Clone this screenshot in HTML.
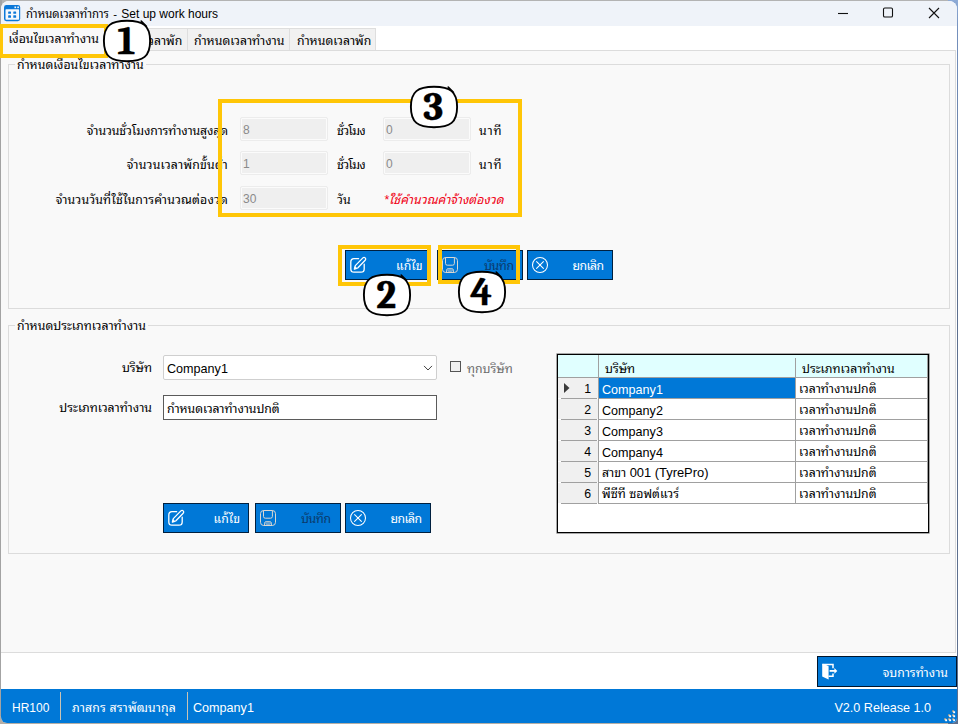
<!DOCTYPE html>
<html lang="th">
<head>
<meta charset="utf-8">
<title>กำหนดเวลาทำการ - Set up work hours</title>
<style>
html,body{margin:0;padding:0;}
body{width:958px;height:724px;position:relative;overflow:hidden;background:#b4aea6;
 font-family:"Liberation Sans","Noto Sans Thai Looped","Loma","Noto Sans Thai UI","Noto Sans Thai","Sarabun",sans-serif;
 font-size:12.3px;color:#000;}
.abs,#win div,#win svg{position:absolute;}
.t{white-space:nowrap;line-height:16px;height:16px;}
.r{text-align:right;}
#frame{left:1px;top:1px;width:956px;height:722px;background:#fff;border-radius:8px 8px 5px 6px;overflow:hidden;}
#win{left:0;top:0;width:958px;height:724px;}
#title{left:1px;top:1px;width:956px;height:25px;background:#eff3f9;border-radius:8px 8px 0 0;}
.tab{top:28px;height:22px;background:#f1f1f1;border:1px solid #dedede;border-bottom:none;box-sizing:border-box;}
.tab.sel{top:26px;height:25px;background:#f9f9f9;}
#panel{left:1px;top:50px;width:955px;height:603px;background:#f9f9f9;border:1px solid #dcdcdc;border-left:none;box-sizing:border-box;}
.gb{border:1px solid #dcdcdc;box-sizing:border-box;}
.gbt{background:#f9f9f9;padding:0 2px;}
.inp{background:#efefef;border:1px solid #ececec;box-shadow:inset 0 0 0 1px #fbfbfb;border-radius:2px;box-sizing:border-box;width:88px;height:24px;}
.inp span{position:absolute;left:2px;top:4px;color:#8a8a8a;font-size:12px;line-height:16px;}
.btn{background:#0078d7;border:1px solid #00203f;box-sizing:border-box;color:#fff;width:86px;height:30px;}
.ic{margin:-1px 0 0 -1px;}
.hl{border:4px solid #ffc607;box-sizing:border-box;}
.num{font-family:"Caladea","Liberation Serif",serif;font-weight:bold;}
</style>
</head>
<body>
<div class="abs" style="left:0;top:0;width:958px;height:12px;background:#b3b3b3"></div>
<div class="abs" style="left:0;top:0;width:2px;height:716px;background:#a3a3a3"></div>
<div class="abs" style="left:948px;top:0;width:10px;height:724px;background:linear-gradient(#8eabd6,#7490bd 30px,#5c6f8e 300px,#5c6f8e)"></div>
<div id="frame" class="abs"></div>
<div id="win" class="abs">
  <div id="title" class="abs">
    <svg style="left:2.8px;top:3.8px" width="17" height="17" viewBox="0 0 17 17">
      <rect x="0" y="0" width="16.2" height="16.2" rx="2.4" fill="#0b78d9"/>
      <rect x="1.5" y="4.15" width="13.6" height="10.6" rx="0.7" fill="#f4f8fd"/>
      <rect x="4.15" y="6.5" width="2.85" height="2.3" rx="0.4" fill="#0b78d9"/>
      <rect x="9.3" y="6.5" width="2.85" height="2.3" rx="0.4" fill="#0b78d9"/>
      <rect x="4.15" y="10.3" width="2.85" height="2.5" rx="0.4" fill="#0b78d9"/>
      <rect x="9.3" y="10.3" width="2.85" height="2.5" rx="0.4" fill="#0b78d9"/>
      <rect x="10.45" y="1.5" width="1.65" height="1.65" fill="#f4f8fd"/>
      <rect x="13.3" y="1.5" width="1.65" height="1.65" fill="#f4f8fd"/>
    </svg>
    <div class="t" id="ttl" style="left:25px;top:5px;font-size:11.4px"><span id="ttl1">กำหนดเวลาทำการ</span><span style="padding:0 1px 0 1.2px"> - </span><span id="ttl2" style="font-size:12px">Set up work hours</span></div>
    <svg style="left:830px;top:0" width="125" height="25" viewBox="0 0 125 25" fill="none" stroke="#111" stroke-width="1.1">
      <line x1="7" y1="12.5" x2="17" y2="12.5"/>
      <rect x="52.5" y="7" width="9" height="9" rx="1.3"/>
      <path d="M98 7 L108 17 M108 7 L98 17"/>
    </svg>
  </div>

  <!-- tab strip -->
  <div id="panel"></div>
  <div class="tab sel" style="left:2px;width:106px"><div class="t" id="tab1" style="left:5.5px;top:4px">เงื่อนไขเวลาทำงาน</div></div>
  <div class="tab" style="left:108px;width:80px"><div class="t" id="tab2" style="left:-1px;top:4px">เงื่อนไขเวลาพัก</div></div>
  <div class="tab" style="left:187px;width:103px"><div class="t" id="tab3" style="left:6px;top:4px">กำหนดเวลาทำงาน</div></div>
  <div class="tab" style="left:289px;width:87px"><div class="t" id="tab4" style="left:7px;top:4px">กำหนดเวลาพัก</div></div>

  <!-- group box 1 -->
  <div class="gb" style="left:8px;top:64px;width:942px;height:245px"></div>
  <div class="t gbt" id="gb1t" style="left:15px;top:57px">กำหนดเงื่อนไขเวลาทำงาน</div>

  <div class="t r" id="l1" style="letter-spacing:-0.12px;left:28px;width:200px;top:123px">จำนวนชั่วโมงการทำงานสูงสุด</div>
  <div class="t r" id="l2" style="letter-spacing:0.23px;left:28px;width:200px;top:157px">จำนวนเวลาพักขั้นต่ำ</div>
  <div class="t r" id="l3" style="letter-spacing:0.15px;left:28px;width:200px;top:192px">จำนวนวันที่ใช้ในการคำนวณต่องวด</div>

  <div class="inp" style="left:240px;top:117px"><span>8</span></div>
  <div class="inp" style="left:240px;top:151px"><span>1</span></div>
  <div class="inp" style="left:240px;top:186px"><span>30</span></div>
  <div class="inp" style="left:383px;top:117px"><span>0</span></div>
  <div class="inp" style="left:383px;top:151px"><span>0</span></div>

  <div class="t" id="u1" style="letter-spacing:-0.7px;left:337px;top:123px">ชั่วโมง</div>
  <div class="t" id="u2" style="letter-spacing:-0.7px;left:337px;top:157px">ชั่วโมง</div>
  <div class="t" id="u3" style="left:337px;top:192px">วัน</div>
  <div class="t" id="m1" style="letter-spacing:0.8px;left:479px;top:123px">นาที</div>
  <div class="t" id="m2" style="letter-spacing:0.8px;left:479px;top:157px">นาที</div>
  <div class="t" id="red" style="left:384px;top:192px;color:#f00014;font-style:italic">*ใช้คำนวณค่าจ้างต่องวด</div>

  <div class="btn" style="left:345px;top:250px"><svg class="ic" style="left:0;top:0" width="28" height="28" viewBox="0 0 28 28" fill="none" stroke="#fff" stroke-width="1.3" stroke-linecap="round" stroke-linejoin="round"><path d="M13.6 8.7 H9 a3.2 3.2 0 0 0 -3.2 3.2 V19 a3.2 3.2 0 0 0 3.2 3.2 H16 a3.2 3.2 0 0 0 3.2 -3.2 V14.2"/><path d="M9.4 19 L10.3 15.6 L17.9 7.9 a1.6 1.6 0 0 1 2.3 2.3 L12.7 18 Z"/><path d="M9.4 19 L10.1 16.6 L11.8 18.3 Z" fill="#fff" stroke-width="0.6"/></svg><div class="t r" style="right:7.5px;top:7px">แก้ไข</div></div>
  <div class="btn" style="left:437px;top:250px"><svg class="ic" style="left:0;top:0" width="28" height="28" viewBox="0 0 28 28" fill="none" stroke="#e6ddd2" stroke-width="1" stroke-linejoin="round" opacity="0.95"><rect x="5.5" y="7.5" width="15" height="15" rx="3.2"/><path d="M8.5 7.5 V13.4 a1.8 1.8 0 0 0 1.8 1.8 H15.6 a1.8 1.8 0 0 0 1.8 -1.8 V7.5"/><path d="M9.6 22.5 V20.2 a1.5 1.5 0 0 1 1.5 -1.5 H14.9 a1.5 1.5 0 0 1 1.5 1.5 V22.5"/><rect x="10.9" y="20" width="4.4" height="1.3" rx="0.6" stroke-width="0.7"/></svg><div class="t r" style="right:8.4px;top:7px;color:#0b3a6b;letter-spacing:-0.4px">บันทึก</div></div>
  <div class="btn" style="left:527px;top:250px"><svg class="ic" style="left:0;top:0" width="28" height="28" viewBox="0 0 28 28" fill="none" stroke="#fff" stroke-width="1.05" stroke-linecap="round"><circle cx="13" cy="15" r="7.5"/><path d="M9.6 11.6 L16.4 18.4 M16.4 11.6 L9.6 18.4"/></svg><div class="t r" style="right:8.6px;top:7px;letter-spacing:-0.6px">ยกเลิก</div></div>

  <!-- group box 2 -->
  <div class="gb" style="left:8px;top:325px;width:942px;height:229px"></div>
  <div class="t gbt" id="gb2t" style="left:15px;top:318px">กำหนดประเภทเวลาทำงาน</div>

  <div class="t r" id="lc" style="left:52px;width:100px;top:360px">บริษัท</div>
  <div class="t r" id="lt" style="left:32px;width:120px;top:400px">ประเภทเวลาทำงาน</div>
  <div id="combo" style="left:163px;top:355px;width:274px;height:25px;background:#fff;border:1px solid #cfcfcf;border-radius:2px;box-sizing:border-box">
    <div class="t" id="cbt" style="left:3px;top:5px;font-size:12.6px">Company1</div>
    <svg style="left:259px;top:9px" width="12" height="8" viewBox="0 0 12 8" fill="none" stroke="#444" stroke-width="1"><path d="M1 0.9 L5 5 L9 0.9"/></svg>
  </div>
  <div id="tbox" style="left:163px;top:395px;width:274px;height:25px;background:#fff;border:1px solid #5a5a5a;box-sizing:border-box">
    <div class="t" id="tbt" style="left:3px;top:5px;letter-spacing:-0.08px">กำหนดเวลาทำงานปกติ</div>
  </div>
  <div id="chk" style="left:450px;top:361px;width:11px;height:11px;background:#f0f0f0;border:1px solid #555;box-sizing:border-box"></div>
  <div class="t" id="chkt" style="left:467px;top:361px;color:#6d6d6d">ทุกบริษัท</div>

  <div class="btn" style="left:163px;top:503px"><svg class="ic" style="left:0;top:0" width="28" height="28" viewBox="0 0 28 28" fill="none" stroke="#fff" stroke-width="1.3" stroke-linecap="round" stroke-linejoin="round"><path d="M13.6 8.7 H9 a3.2 3.2 0 0 0 -3.2 3.2 V19 a3.2 3.2 0 0 0 3.2 3.2 H16 a3.2 3.2 0 0 0 3.2 -3.2 V14.2"/><path d="M9.4 19 L10.3 15.6 L17.9 7.9 a1.6 1.6 0 0 1 2.3 2.3 L12.7 18 Z"/><path d="M9.4 19 L10.1 16.6 L11.8 18.3 Z" fill="#fff" stroke-width="0.6"/></svg><div class="t r" style="right:8px;top:7px">แก้ไข</div></div>
  <div class="btn" style="left:255px;top:503px"><svg class="ic" style="left:0;top:0" width="28" height="28" viewBox="0 0 28 28" fill="none" stroke="#e6ddd2" stroke-width="1" stroke-linejoin="round" opacity="0.95"><rect x="5.5" y="7.5" width="15" height="15" rx="3.2"/><path d="M8.5 7.5 V13.4 a1.8 1.8 0 0 0 1.8 1.8 H15.6 a1.8 1.8 0 0 0 1.8 -1.8 V7.5"/><path d="M9.6 22.5 V20.2 a1.5 1.5 0 0 1 1.5 -1.5 H14.9 a1.5 1.5 0 0 1 1.5 1.5 V22.5"/><rect x="10.9" y="20" width="4.4" height="1.3" rx="0.6" stroke-width="0.7"/></svg><div class="t r" style="right:9.4px;top:7px;color:#0b3a6b;letter-spacing:-0.4px">บันทึก</div></div>
  <div class="btn" style="left:345px;top:503px"><svg class="ic" style="left:0;top:0" width="28" height="28" viewBox="0 0 28 28" fill="none" stroke="#fff" stroke-width="1.05" stroke-linecap="round"><circle cx="13" cy="15" r="7.5"/><path d="M9.6 11.6 L16.4 18.4 M16.4 11.6 L9.6 18.4"/></svg><div class="t r" style="right:8.6px;top:7px;letter-spacing:-0.6px">ยกเลิก</div></div>

  <!-- grid -->
  <div id="grid" style="left:557px;top:354px;width:372px;height:179px;background:#fff;border:1px solid #000;box-shadow:0 0 0 0.6px rgba(0,0,0,.55);box-sizing:border-box;overflow:hidden">
    <div style="left:0;top:0;width:370px;height:22px;background:#e0ffff"></div>
    <div style="left:0;top:22px;width:370px;height:1px;background:#a0a0a0"></div>
    <div class="t" id="gh1" style="left:47px;top:6px">บริษัท</div>
    <div class="t" id="gh2" style="left:244px;top:6px">ประเภทเวลาทำงาน</div>
    <div style="left:0;top:23px;width:40px;height:20px;background:#f0f0f0"></div>
    <div style="left:3px;top:43px;width:36px;height:1px;background:#a0a0a0"></div>
    <div style="left:41px;top:43px;width:329px;height:1px;background:#a0a0a0"></div>
    <div style="left:41px;top:23px;width:196px;height:20px;background:#0078d7"></div>
    <svg style="left:6px;top:28px" width="6" height="10" viewBox="0 0 6 10"><path d="M0 0 L5.5 5 L0 10 Z" fill="#3a3a3a"/></svg>
    <div class="t r" style="left:10px;width:23px;top:26px;font-size:12.3px">1</div>
    <div class="t" id="gc0" style="left:44px;top:27px;color:#fff;font-size:12.6px;">Company1</div>
    <div class="t" id="gt0" style="left:241px;top:26px">เวลาทำงานปกติ</div>
    <div style="left:0;top:44px;width:40px;height:20px;background:#f0f0f0"></div>
    <div style="left:3px;top:64px;width:36px;height:1px;background:#a0a0a0"></div>
    <div style="left:41px;top:64px;width:329px;height:1px;background:#a0a0a0"></div>
    <div class="t r" style="left:10px;width:23px;top:47px;font-size:12.3px">2</div>
    <div class="t" id="gc1" style="left:44px;top:48px;color:#000;font-size:12.6px;">Company2</div>
    <div class="t" id="gt1" style="left:241px;top:47px">เวลาทำงานปกติ</div>
    <div style="left:0;top:65px;width:40px;height:20px;background:#f0f0f0"></div>
    <div style="left:3px;top:85px;width:36px;height:1px;background:#a0a0a0"></div>
    <div style="left:41px;top:85px;width:329px;height:1px;background:#a0a0a0"></div>
    <div class="t r" style="left:10px;width:23px;top:68px;font-size:12.3px">3</div>
    <div class="t" id="gc2" style="left:44px;top:69px;color:#000;font-size:12.6px;">Company3</div>
    <div class="t" id="gt2" style="left:241px;top:68px">เวลาทำงานปกติ</div>
    <div style="left:0;top:86px;width:40px;height:20px;background:#f0f0f0"></div>
    <div style="left:3px;top:106px;width:36px;height:1px;background:#a0a0a0"></div>
    <div style="left:41px;top:106px;width:329px;height:1px;background:#a0a0a0"></div>
    <div class="t r" style="left:10px;width:23px;top:89px;font-size:12.3px">4</div>
    <div class="t" id="gc3" style="left:44px;top:90px;color:#000;font-size:12.6px;">Company4</div>
    <div class="t" id="gt3" style="left:241px;top:89px">เวลาทำงานปกติ</div>
    <div style="left:0;top:107px;width:40px;height:20px;background:#f0f0f0"></div>
    <div style="left:3px;top:127px;width:36px;height:1px;background:#a0a0a0"></div>
    <div style="left:41px;top:127px;width:329px;height:1px;background:#a0a0a0"></div>
    <div class="t r" style="left:10px;width:23px;top:110px;font-size:12.3px">5</div>
    <div class="t" id="gc4" style="left:44px;top:110px;color:#000;">สาขา <span style="font-size:12.9px">001 (TyrePro)</span></div>
    <div class="t" id="gt4" style="left:241px;top:110px">เวลาทำงานปกติ</div>
    <div style="left:0;top:128px;width:40px;height:20px;background:#f0f0f0"></div>
    <div style="left:3px;top:148px;width:36px;height:1px;background:#a0a0a0"></div>
    <div style="left:41px;top:148px;width:329px;height:1px;background:#a0a0a0"></div>
    <div class="t r" style="left:10px;width:23px;top:131px;font-size:12.3px">6</div>
    <div class="t" id="gc5" style="left:44px;top:131px;color:#000;">พีซีที ซอฟต์แวร์</div>
    <div class="t" id="gt5" style="left:241px;top:131px">เวลาทำงานปกติ</div>
    <div style="left:40px;top:0;width:1px;height:149px;background:#a0a0a0"></div>
    <div style="left:237px;top:3px;width:1px;height:146px;background:#a0a0a0"></div>
    <div style="left:369px;top:0;width:1px;height:149px;background:#a0a0a0"></div>
  </div>

  <!-- bottom -->
  <div class="btn" id="exit" style="left:817px;top:656px;width:140px;height:31px;border-color:#00152b"><svg class="ic" style="left:0;top:0" width="28" height="30" viewBox="0 0 28 30" fill="none" stroke="#fff"><path d="M5.2 7.8 L7.2 8 L11.6 10.2 V23.6 L5.2 20.4 Z" fill="#fff" stroke="none"/><path d="M5.6 8.5 H16 V12.2 M16 17.6 V20.3 H11.6" stroke-width="1.5"/><path d="M12.6 14.9 H18" stroke-width="1.8"/><path d="M17.4 12 L20.3 14.9 L17.4 17.8 Z" fill="#fff" stroke="none"/></svg><div class="t r" id="exitt" style="right:8px;top:8px">จบการทำงาน</div></div>
  <div id="status" style="left:1px;top:689px;width:956px;height:34px;background:#0078d7;border-radius:0 0 5px 6px">
    <div class="t" id="s1" style="left:11px;top:11px;color:#fff;font-size:12px">HR100</div>
    <div style="left:59px;top:3px;width:1px;height:28px;background:#c9c3b4"></div>
    <div class="t" id="s2" style="left:71px;top:11px;color:#fff;letter-spacing:0.14px">ภาสกร สราพัฒนากุล</div>
    <div style="left:186px;top:3px;width:1px;height:28px;background:#c9c3b4"></div>
    <div class="t" id="s3" style="left:192px;top:11px;color:#fff;font-size:12.6px">Company1</div>
    <div class="t r" id="s4" style="right:26px;top:11px;color:#fff;font-size:12.6px">V2.0 Release 1.0</div>
    <svg style="left:940px;top:18px" width="16" height="16" viewBox="941 707 16 16"><rect x="952.2" y="710.3" width="1.9" height="1.9" fill="#c9ab86"/><rect x="948.2" y="714.3" width="1.9" height="1.9" fill="#c9ab86"/><rect x="952.2" y="714.3" width="1.9" height="1.9" fill="#c9ab86"/><rect x="944.2" y="718.3" width="1.9" height="1.9" fill="#c9ab86"/><rect x="948.2" y="718.3" width="1.9" height="1.9" fill="#c9ab86"/><rect x="952.2" y="718.3" width="1.9" height="1.9" fill="#c9ab86"/><rect x="953.2" y="711.3" width="1.9" height="1.9" fill="#fff"/><rect x="949.2" y="715.3" width="1.9" height="1.9" fill="#fff"/><rect x="953.2" y="715.3" width="1.9" height="1.9" fill="#fff"/><rect x="945.2" y="719.3" width="1.9" height="1.9" fill="#fff"/><rect x="949.2" y="719.3" width="1.9" height="1.9" fill="#fff"/><rect x="953.2" y="719.3" width="1.9" height="1.9" fill="#fff"/></svg>
  </div>

  <!-- annotation overlays -->
  <div class="hl" style="left:-1px;top:24px;width:109px;height:34px"></div>
  <div class="hl" style="left:218px;top:99px;width:304px;height:118px"></div>
  <div class="hl" style="left:338px;top:245px;width:93px;height:41px"></div>
  <div class="hl" style="left:438px;top:245px;width:82px;height:39px"></div>
  <svg id="c1" style="left:96.9px;top:12.700000000000003px" width="60" height="56" viewBox="-30 -28 60 56"><path d="M 23.1 0 C 23.1 15.35 16.17 20.2 0 20.2 C -16.17 20.2 -23.1 15.35 -23.1 0 C -23.1 -15.35 -16.17 -20.2 0 -20.2 C 16.17 -20.2 23.1 -15.35 23.1 0 Z" fill="#fff" stroke="#000" stroke-width="1.9"/><path d="M14.2 -20 L19.4 -14.6" stroke="#000" stroke-width="1.6" stroke-linecap="round" fill="none"/><text class="num" x="-0.8" y="12.6" text-anchor="middle" font-size="39.5" stroke="#000" stroke-width="0.3">1</text></svg>
  <svg id="c2" style="left:356.7px;top:266.8px" width="60" height="56" viewBox="-30 -28 60 56"><path d="M 23.1 0 C 23.1 15.35 16.17 20.2 0 20.2 C -16.17 20.2 -23.1 15.35 -23.1 0 C -23.1 -15.35 -16.17 -20.2 0 -20.2 C 16.17 -20.2 23.1 -15.35 23.1 0 Z" fill="#fff" stroke="#000" stroke-width="1.9"/><path d="M14.2 -20 L19.4 -14.6" stroke="#000" stroke-width="1.6" stroke-linecap="round" fill="none"/><text class="num" x="-0.8" y="12.6" text-anchor="middle" font-size="39.5" stroke="#000" stroke-width="0.3">2</text></svg>
  <svg id="c3" style="left:403.5px;top:78.8px" width="60" height="56" viewBox="-30 -28 60 56"><path d="M 23.1 0 C 23.1 15.35 16.17 20.2 0 20.2 C -16.17 20.2 -23.1 15.35 -23.1 0 C -23.1 -15.35 -16.17 -20.2 0 -20.2 C 16.17 -20.2 23.1 -15.35 23.1 0 Z" fill="#fff" stroke="#000" stroke-width="1.9"/><path d="M14.2 -20 L19.4 -14.6" stroke="#000" stroke-width="1.6" stroke-linecap="round" fill="none"/><text class="num" x="-0.8" y="12.6" text-anchor="middle" font-size="39.5" stroke="#000" stroke-width="0.3">3</text></svg>
  <svg id="c4" style="left:451.7px;top:263.8px" width="60" height="56" viewBox="-30 -28 60 56"><path d="M 23.1 0 C 23.1 15.35 16.17 20.2 0 20.2 C -16.17 20.2 -23.1 15.35 -23.1 0 C -23.1 -15.35 -16.17 -20.2 0 -20.2 C 16.17 -20.2 23.1 -15.35 23.1 0 Z" fill="#fff" stroke="#000" stroke-width="1.9"/><path d="M14.2 -20 L19.4 -14.6" stroke="#000" stroke-width="1.6" stroke-linecap="round" fill="none"/><text class="num" x="-0.8" y="12.6" text-anchor="middle" font-size="39.5" stroke="#000" stroke-width="0.3">4</text></svg>
</div>
</body>
</html>
